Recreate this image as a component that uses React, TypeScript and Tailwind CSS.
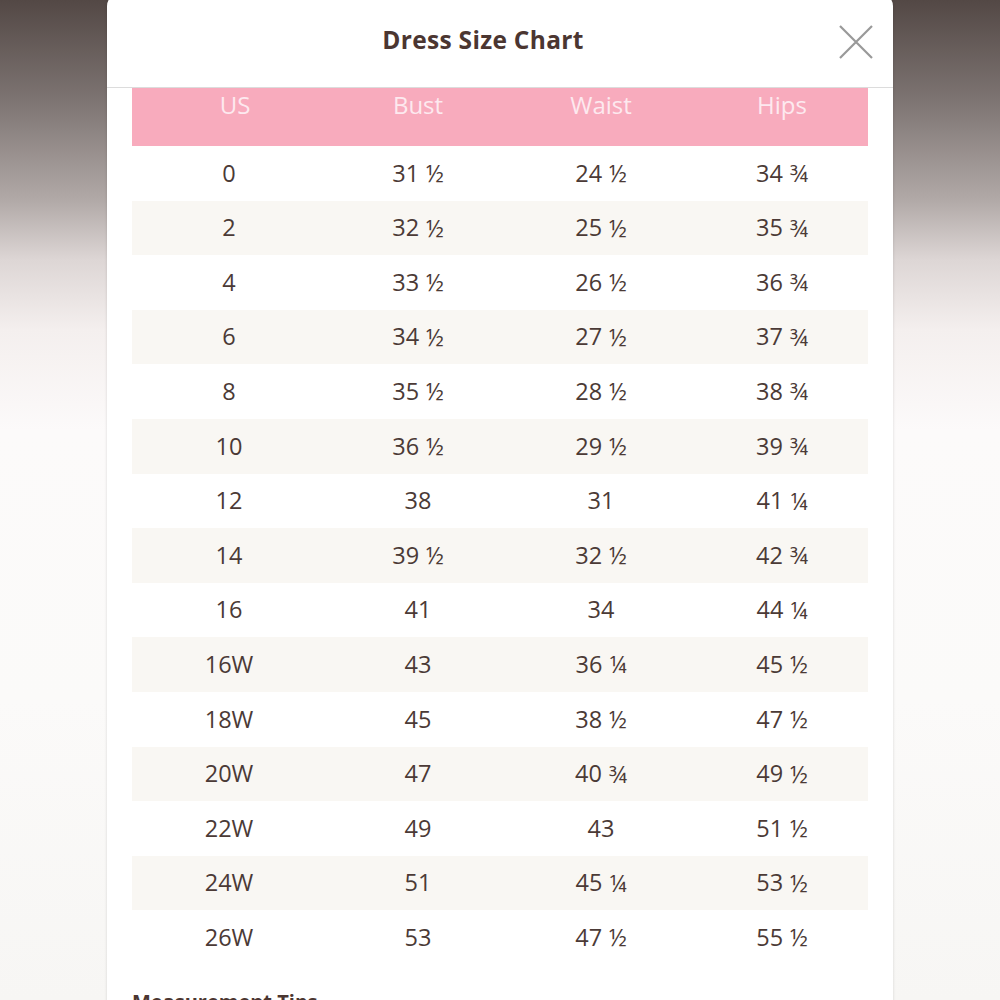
import React from "react";

const rows: [string, string, string, string][] = [
  ["0", "31 ½", "24 ½", "34 ¾"],
  ["2", "32 ½", "25 ½", "35 ¾"],
  ["4", "33 ½", "26 ½", "36 ¾"],
  ["6", "34 ½", "27 ½", "37 ¾"],
  ["8", "35 ½", "28 ½", "38 ¾"],
  ["10", "36 ½", "29 ½", "39 ¾"],
  ["12", "38", "31", "41 ¼"],
  ["14", "39 ½", "32 ½", "42 ¾"],
  ["16", "41", "34", "44 ¼"],
  ["16W", "43", "36 ¼", "45 ½"],
  ["18W", "45", "38 ½", "47 ½"],
  ["20W", "47", "40 ¾", "49 ½"],
  ["22W", "49", "43", "51 ½"],
  ["24W", "51", "45 ¼", "53 ½"],
  ["26W", "53", "47 ½", "55 ½"],
];

function Cell({ v }: { v: string }) {
  const parts = v.split(" ");
  return (
    <div className="flex items-center justify-center">
      <span>{parts[0]}</span>
      {parts[1] && <span className="ml-[7px] text-[23px]">{parts[1]}</span>}
    </div>
  );
}

export default function App() {
  return (
    <div
      className="w-[1000px] h-[1000px] overflow-hidden bg-[linear-gradient(to_bottom,#534845_0px,#7d7472_100px,#b1a9a7_200px,#ddd6d5_260px,#f4efee_330px,#fcfafa_430px,#fbfaf9_700px,#f7f6f4_1000px)]"
      style={{ fontFamily: '"Open Sans", "Noto Sans", sans-serif' }}
    >
      <div className="ml-[107px] mt-[-6px] w-[786px] h-[1020px] bg-white rounded-[12px] shadow-[0_0_3px_rgba(0,0,0,0.15)]">
        <div className="relative h-[94px] border-b border-[#dcdcdc] flex items-center justify-center">
          <div className="mr-[34px] text-[24.5px] font-bold text-[#4b3631] tracking-[0.3px]">
            Dress Size Chart
          </div>
          <svg
            className="absolute left-[731px] top-[30px]"
            width="36"
            height="36"
            viewBox="0 0 36 36"
          >
            <path d="M2 2 L34 34 M34 2 L2 34" stroke="#999999" strokeWidth="2.2" />
          </svg>
        </div>
        <div className="mx-[25px]">
          <div className="h-[58px] bg-[#f8abbd] grid grid-cols-[194px_184px_182px_176px] text-[#fde9ef] text-[24px] leading-[34px]">
            <div className="text-center pl-[12px]">US</div>
            <div className="text-center">Bust</div>
            <div className="text-center">Waist</div>
            <div className="text-center pl-[4px]">Hips</div>
          </div>
          {rows.map((r, i) => (
            <div
              key={i}
              className={`h-[54.6px] grid grid-cols-[194px_184px_182px_176px] items-center text-[23.5px] text-[#4b3a36] ${
                i % 2 === 1 ? "bg-[#f9f7f3]" : "bg-white"
              }`}
            >
              {r.map((v, j) => (
                <div key={j} className={j === 3 ? "pl-[4px]" : ""}>
                  <Cell v={v} />
                </div>
              ))}
            </div>
          ))}
          <div className="pt-[22px] text-[20px] font-bold text-[#4b3631]">
            Measurement Tips
          </div>
        </div>
      </div>
    </div>
  );
}
